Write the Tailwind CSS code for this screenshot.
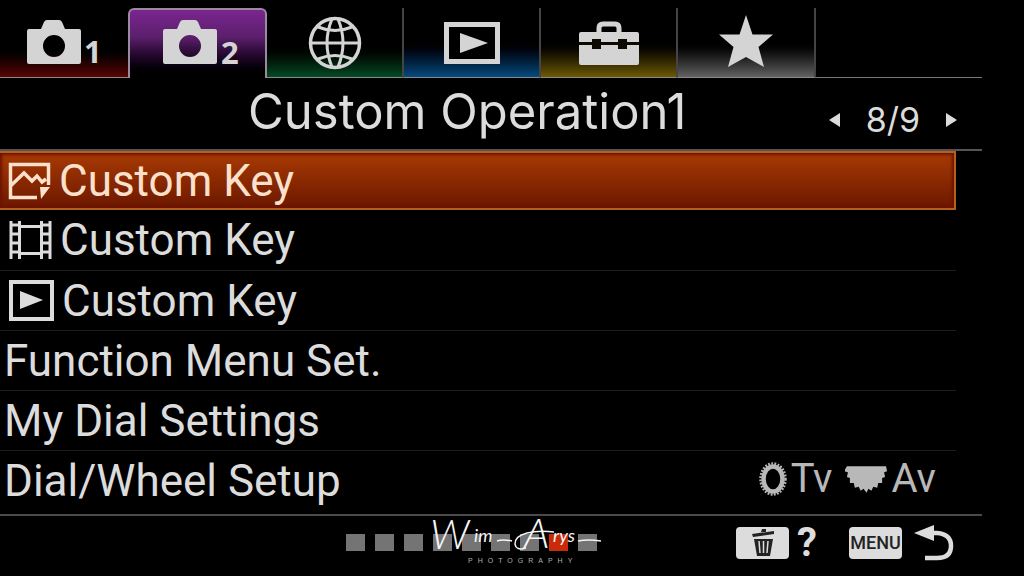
<!DOCTYPE html>

<html lang="en">
  <head>
    <title>Camera Menu - Custom Operation1</title>
    <meta charset="UTF-8" />
    <meta name="viewport" content="width=device-width, initial-scale=1" />

    <script src="https://cdn.jsdelivr.net/npm/@tailwindcss/browser@4"></script>
  </head>

  <body class="bg-black text-[#dcdcdc] font-['Roboto',sans-serif]">
    <div class="min-h-screen pr-[42px] overflow-hidden">
      <!-- Tabs -->
      <nav class="pt-2 h-[78px] grid grid-cols-[128fr_139fr_137fr_137fr_137fr_138fr_166fr]">
        <button aria-label="Camera settings 1" class="flex items-center justify-center border-b border-[#8a8a8a] bg-linear-to-b from-black from-55% to-[#5a0606]">
          <svg class="w-[84px] h-[60px]" viewBox="0 0 84 60" fill="#d4d4d4">
            <path fill-rule="evenodd" d="M5 18q0-2 2-2h12l3-7q1-2 3-2h12q2 0 3 2l3 7h14q2 0 2 2v31q0 2-2 2H7q-2 0-2-2zM32 22a11 11 0 1 0 0 22 11 11 0 0 0 0-22z" />
            <text x="62" y="50" font-size="31" font-weight="700" font-family="Noto Sans, sans-serif">1</text>
          </svg>
        </button>
        <button aria-label="Camera settings 2" aria-current="page" class="flex items-center justify-center rounded-t-md border-2 border-b-0 border-[#9a8a9f] bg-linear-to-b from-[#7b2590] via-[#5b1f6c] via-40% to-black">
          <svg class="w-[84px] h-[60px]" viewBox="0 0 84 60" fill="#d4d4d4">
            <path fill-rule="evenodd" d="M7 17q0-2 2-2h12l3-7q1-2 3-2h12q2 0 3 2l3 7h14q2 0 2 2v31q0 2-2 2H9q-2 0-2-2zM34 21a11 11 0 1 0 0 22 11 11 0 0 0 0-22z" />
            <text x="65" y="50" font-size="31" font-weight="700" font-family="Noto Sans, sans-serif">2</text>
          </svg>
        </button>
        <button aria-label="Network" class="flex items-center justify-center border-b border-r-2 border-r-[#444] border-b-[#8a8a8a] bg-linear-to-b from-black from-50% to-[#044a26]">
          <svg class="w-14 h-14" viewBox="0 0 56 56" fill="none" stroke="#d4d4d4" stroke-width="3">
            <circle cx="28" cy="28" r="24.500" stroke-width="3.500" />
            <path d="M3 28h50M11 12q17 7 34 0M11 44q17-7 34 0M25 4q-10 24 0 48M31 4q10 24 0 48" />
          </svg>
        </button>
        <button aria-label="Playback" class="flex items-center justify-center border-b border-r-2 border-r-[#444] border-b-[#8a8a8a] bg-linear-to-b from-black from-45% to-[#064a80]">
          <svg class="w-14 h-[42px]" viewBox="0 0 56 42">
            <path d="M2.500 2.500h51v37h-51z" fill="#000" stroke="#d4d4d4" stroke-width="5" />
            <path d="M16 11l28 10-28 10z" fill="#d4d4d4" />
          </svg>
        </button>
        <button aria-label="Setup" class="flex items-center justify-center border-b border-r-2 border-r-[#444] border-b-[#8a8a8a] bg-linear-to-b from-black from-45% to-[#6e5a04]">
          <svg class="w-[60px] h-11" viewBox="0 0 60 44">
            <path d="M20 12V7q0-4 4-4h12q4 0 4 4v5" fill="none" stroke="#d4d4d4" stroke-width="5" />
            <path d="M2 11h56q2 0 2 2v8H0v-8q0-2 2-2zM0 24h60v18q0 2-2 2H2q-2 0-2-2z" fill="#d4d4d4" />
            <path d="M0 21h60v3H0zM13 18h9v10h-9zM39 18h9v10h-9z" fill="#0c0a02" />
          </svg>
        </button>
        <button aria-label="My Menu" class="flex items-center justify-center pb-1 border-b border-r-2 border-r-[#444] border-b-[#8a8a8a] bg-linear-to-b from-black from-45% to-[#626262]">
          <svg class="w-[54px] h-[52px]" viewBox="0 0 54 52" fill="#d4d4d4">
            <path d="M27 0l6.500 19.500H54L39.500 32 45 52 27 42 9 52l5.500-20L0 19.500h20.500z" />
          </svg>
        </button>
        <div class="border-b border-[#777]"></div>
      </nav>

      <!-- Title and page -->
      <header class="h-[73px] flex items-center border-b-2 border-[#555]">
        <h1 class="grow pl-[248px] pb-1 text-[49px] leading-none font-['Inter',sans-serif] whitespace-nowrap">Custom Operation1</h1>
        <div class="flex items-center gap-[26px] pr-6 pt-3">
          <button aria-label="Previous page">
            <svg class="w-3 h-3.5" viewBox="0 0 12 14" fill="#dcdcdc"><path d="M12 0v14L1 7z" /></svg>
          </button>
          <span class="text-[34px] leading-none font-['Inter',sans-serif]">8/9</span>
          <button aria-label="Next page">
            <svg class="w-3 h-3.5" viewBox="0 0 12 14" fill="#dcdcdc"><path d="M0 0v14l11-7z" /></svg>
          </button>
        </div>
      </header>

      <!-- Menu items -->
      <ul class="pr-[26px] text-[44px] leading-[60px] whitespace-nowrap">
        <li>
          <button class="w-full h-[59px] flex items-center gap-2 pl-2 text-[#fbe0cc] border-2 border-l-0 border-[#b5601c] bg-linear-to-b from-[#a83a04] to-[#6c1800] shadow-[inset_0_0_3px_2px_#6c1400]">
            <svg class="w-[43px] h-[38px]" viewBox="0 0 43 38">
              <path d="M29 35.500H2.500v-33h38V23M2.500 24L16 11l8 8 5-5 5 6 4-3" fill="none" stroke="#fbe0cc" stroke-width="3.500" />
              <path d="M32 25h10l-9 12z" fill="#fbe0cc" />
            </svg>
            Custom Key
          </button>
        </li>
        <li class="border-b border-[#1c1c1c]">
          <button class="w-full h-[60px] flex items-center gap-2 pl-[9px]">
            <svg class="w-[43px] h-[38px]" viewBox="0 0 43 38" fill="none" stroke="#dcdcdc" stroke-width="3">
              <path d="M2 0v38M10.500 0v38M32.500 0v38M41 0v38M10 5.500h23M10 32.500h23M2 4h8M2 13h8M2 22h8M2 31h8M33 4h8M33 13h8M33 22h8M33 31h8" />
            </svg>
            Custom Key
          </button>
        </li>
        <li class="border-b border-[#1c1c1c]">
          <button class="w-full h-[59px] flex items-center gap-2 pl-[9px]">
            <svg class="w-[45px] h-[41px]" viewBox="0 0 45 41">
              <path d="M2 2h41v37H2z" fill="none" stroke="#dcdcdc" stroke-width="4" />
              <path d="M11 11l23 9-23 9z" fill="#dcdcdc" />
            </svg>
            Custom Key
          </button>
        </li>
        <li class="border-b border-[#1c1c1c]">
          <button class="w-full h-[59px] flex items-center pl-1">Function Menu Set.</button>
        </li>
        <li class="border-b border-[#1c1c1c]">
          <button class="w-full h-[59px] flex items-center pl-1">My Dial Settings</button>
        </li>
        <li>
          <button class="w-full h-[63px] pb-1 flex items-center justify-between pl-1 pr-5">
            Dial/Wheel Setup
            <span class="flex items-center gap-1 pb-1 text-[40px] leading-none text-[#b8b8b8]">
              <svg class="w-7 h-9" viewBox="0 0 28 36" fill="none" stroke="#b8b8b8">
                <ellipse cx="14" cy="18" rx="9.500" ry="12.500" stroke-width="4.500" />
                <ellipse cx="14" cy="18" rx="12.500" ry="15.500" stroke-width="2.500" stroke-dasharray="1.800 1.400" />
              </svg>
              Tv
              <svg class="ml-2 w-[43px] h-7" viewBox="0 0 44 28" fill="#b8b8b8">
                <path d="M2 1h40l1 5-3 1 1 5-3 1 0 5-4 0-1 5-4-1-2 4-3-2-2 4-3-4-3 2-2-4-4 1-1-5-4 0v-5l-3-1 1-5-4-1z" />
              </svg>
              Av
            </span>
          </button>
        </li>
      </ul>

      <!-- Footer -->
      <footer class="relative h-[61px] flex items-center justify-between border-t-2 border-[#4a4a4a] pl-[346px] pr-7">
        <div class="flex gap-2.5 pb-1.5" aria-hidden="true">
          <span class="w-[19px] h-[17px] bg-[#747474]"></span>
          <span class="w-[19px] h-[17px] bg-[#747474]"></span>
          <span class="w-[19px] h-[17px] bg-[#747474]"></span>
          <span class="w-[19px] h-[17px] bg-[#747474]"></span>
          <span class="w-[19px] h-[17px] bg-[#747474]"></span>
          <span class="w-[19px] h-[17px] bg-[#747474]"></span>
          <span class="w-[19px] h-[17px] bg-[#747474]"></span>
          <span class="w-[19px] h-[17px] bg-[#c92a08]"></span>
          <span class="w-[19px] h-[17px] bg-[#747474]"></span>
        </div>

        <!-- Photographer's mark, over the page squares -->
        <div class="absolute left-[426px] -top-2 w-[176px]">
          <svg class="w-[176px] h-[49px]" viewBox="0 0 176 49" fill="#f4f4f4" font-family="Lato, sans-serif" font-style="italic" font-weight="300">
            <text x="4" y="41" font-size="42">W</text>
            <text x="48" y="34" font-size="18" font-weight="400">im</text>
            <text x="98" y="40" font-size="42">A</text>
            <text x="127" y="34" font-size="18" font-weight="400">rys</text>
            <path d="M71 33q5-2 15 0M152 33q10-2 23 0M100 40q-10 3-11-4 0-8 12-11 12-3 27-1" fill="none" stroke="#f4f4f4" stroke-width="1.500" />
          </svg>
          <p class="pl-[42px] text-[7px] leading-none tracking-[5px] text-[#b0b0b0] font-['Liberation_Sans',sans-serif]">PHOTOGRAPHY</p>
        </div>

        <div class="flex items-center gap-8 pb-1.5">
          <button class="flex items-center gap-2" aria-label="Delete button: help">
            <span class="w-[53px] h-8 rounded bg-[#dcdcdc] flex items-center justify-center">
              <svg class="w-6 h-7" viewBox="0 0 24 28">
                <path d="M1 5l22-3v3L2 8zM10 3l1-3h4v3zM3 10h19l-3 17H6z" fill="#222" />
                <path d="M8 12l1 12M12.500 12v12M17 12l-1 12" stroke="#dcdcdc" stroke-width="1.500" />
              </svg>
            </span>
            <span class="text-[40px] leading-8 font-bold">?</span>
          </button>
          <button class="flex items-center gap-3" aria-label="Menu button: back">
            <span class="w-[53px] h-8 rounded bg-[#dcdcdc] text-[#222] text-lg leading-8 font-medium text-center">MENU</span>
            <svg class="w-10 h-9" viewBox="0 0 40 36">
              <path d="M14 8h9q14 1 14 13 0 12-14 12H11" fill="none" stroke="#dcdcdc" stroke-width="4.500" />
              <path d="M0 8L20 0v16z" fill="#dcdcdc" />
            </svg>
          </button>
        </div>
      </footer>
    </div>
  </body>
</html>
